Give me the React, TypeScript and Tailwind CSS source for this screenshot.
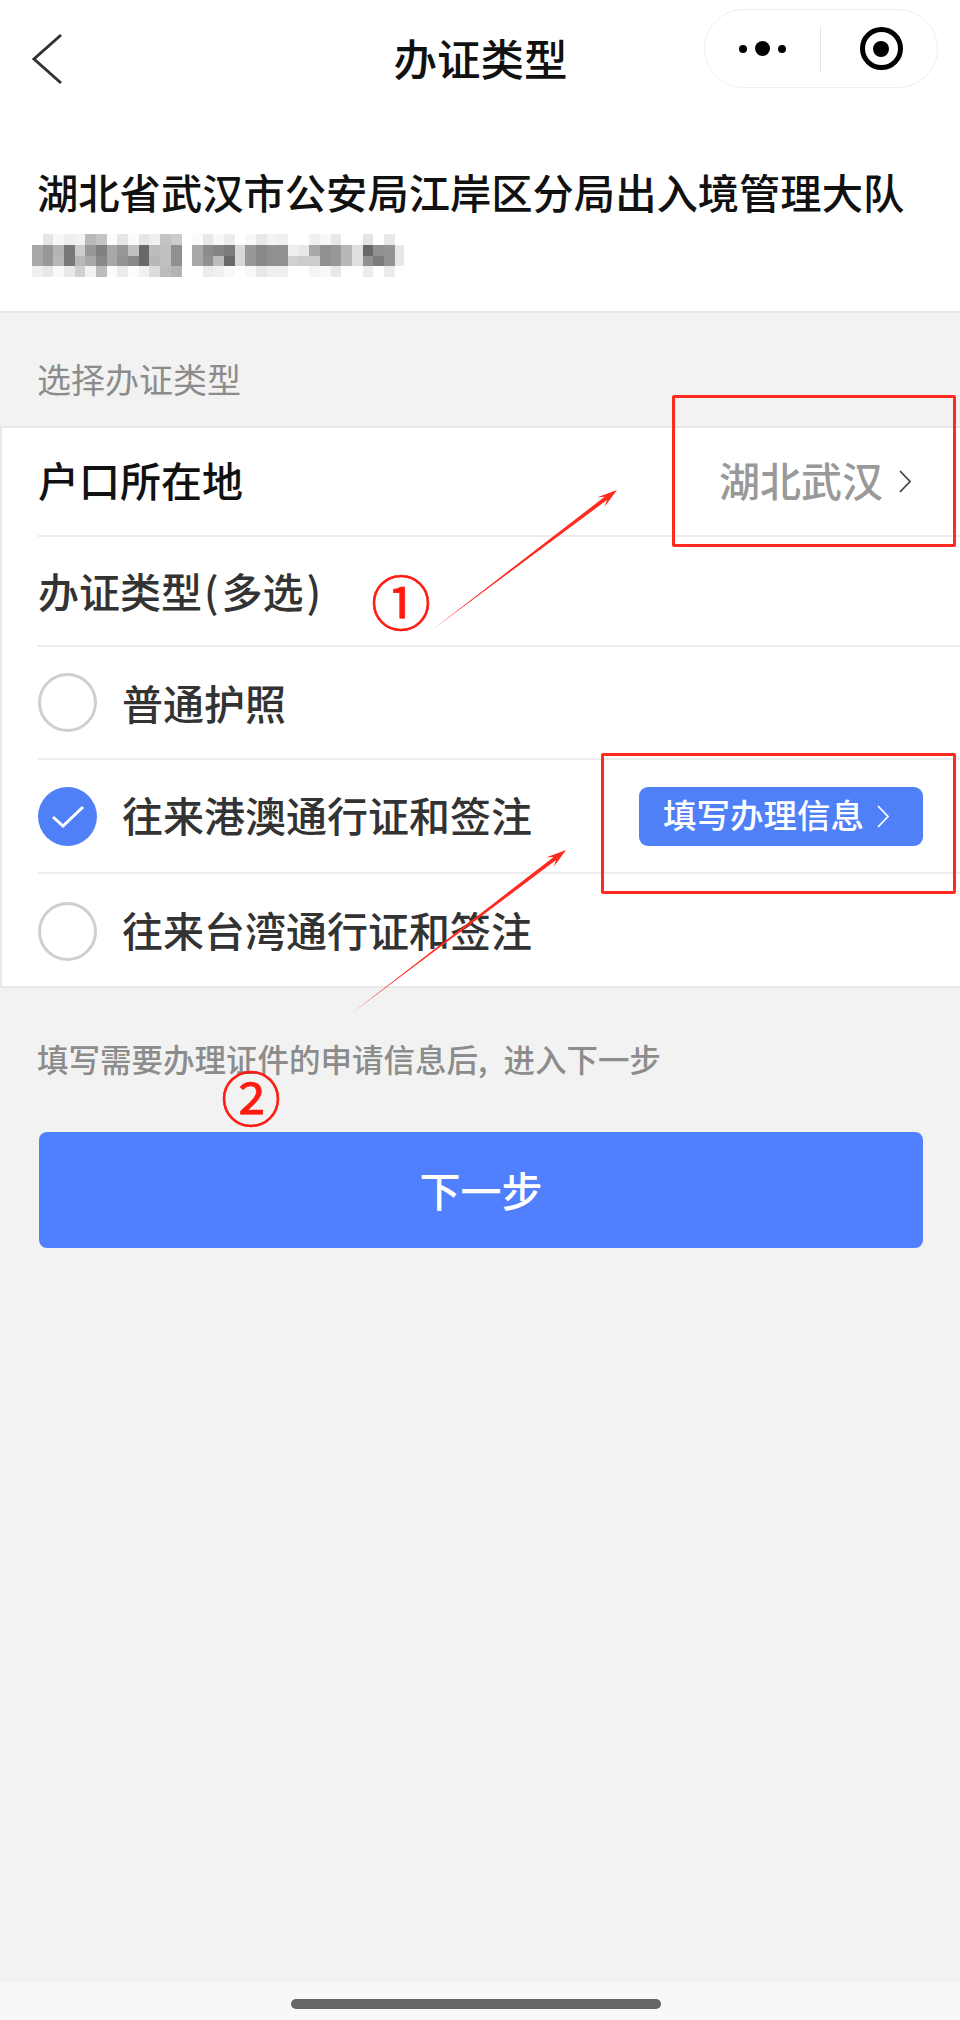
const mosaicLeft = [
  ['fff', 'e5e5e5', 'f8f8f8', 'eee', 'f2f2f2', 'b8b8b8', 'c4c4c4', 'fbfbfb', 'e6e6e6', 'fbfbfb', 'e6e6e6', 'f0f0f0', 'c4c4c4', 'ccc'],
  ['a8a8a8', '989898', 'b4b4b4', '787878', 'ccc', '989898', '808080', 'a8a8a8', '989898', 'c0c0c0', '686868', 'bcbcbc', 'c0c0c0', '909090'],
  ['a8a8a8', '989898', 'b8b8b8', '787878', 'b8b8b8', 'a8a8a8', '888', 'a8a8a8', '949494', '888', '686868', 'b8b8b8', 'c0c0c0', '909090'],
  ['f0f0f0', 'e8e8e8', 'f8f8f8', 'e8e8e8', 'd0d0d0', 'f2f2f2', 'bcbcbc', 'fcfcfc', 'ececec', 'fcfcfc', 'f0f0f0', 'dcdcdc', 'bcbcbc', 'b4b4b4'],
]

const mosaicRight = [
  ['fbfbfb', 'e8e8e8', 'f8f8f8', 'ececec', 'fff', 'f8f8f8', 'e8e8e8', 'f4f4f4', 'f0f0f0', 'fff', 'fff', 'f0f0f0', 'f8f8f8', 'e8e8e8', 'fff', 'fff', 'e4e4e4', 'fff', 'e8e8e8', 'fff'],
  ['a8a8a8', '8c8c8c', '848484', '7c7c7c', 'd8d8d8', '989898', '888', '909090', '909090', 'eee', 'e8e8e8', 'a8a8a8', '909090', '989898', 'b8b8b8', 'e0e0e0', '686868', '909090', '949494', 'e8e8e8'],
  ['a8a8a8', '909090', 'bcbcbc', '686868', 'd8d8d8', '989898', '888', '909090', '909090', 'd0d0d0', 'ccc', 'ccc', '909090', '989898', 'b8b8b8', 'e0e0e0', '909090', '7c7c7c', '949494', 'e8e8e8'],
  ['fff', 'ececec', 'f0f0f0', 'f8f8f8', 'fff', 'f8f8f8', 'e8e8e8', 'f0f0f0', 'f0f0f0', 'fff', 'fff', 'f4f4f4', 'f8f8f8', 'e8e8e8', 'fff', 'fff', 'ececec', 'fff', 'ececec', 'fff'],
]

const CELL = 10.67

// the pixelated number under the office name
function Mosaic() {
  const rows = [
    { cells: mosaicLeft, x: 0 },
    { cells: mosaicRight, x: 160 },
  ]
  return (
    <svg width="372" height="43" viewBox="0 0 372 43" className="block" shapeRendering="crispEdges">
      {rows.map(part =>
        part.cells.map((row, r) =>
          row.map((c, i) => (
            <rect
              key={`${part.x}-${r}-${i}`}
              x={part.x + i * CELL}
              y={r * 10.75}
              width={CELL + 0.3}
              height={11}
              fill={`#${c}`}
            />
          )),
        ),
      )}
    </svg>
  )
}

function Chevron({ className, color }: { className: string; color: string }) {
  return (
    <svg viewBox="0 0 12 23" fill="none" className={className}>
      <polyline points="1,1 11,11.5 1,22" stroke={color} strokeWidth="1.8" />
    </svg>
  )
}

function Radio({ checked }: { checked?: boolean }) {
  if (checked) {
    return (
      <div className="w-[59px] h-[59px] shrink-0 rounded-full bg-[#5080f8] flex items-center justify-center">
        <svg width="59" height="59" viewBox="0 0 59 59" fill="none">
          <polyline points="15,30 25,39 45,20" stroke="#fff" strokeWidth="3" />
        </svg>
      </div>
    )
  }
  return <div className="w-[59px] h-[59px] shrink-0 rounded-full border-[3px] border-[#cfcfcf] bg-white" />
}

function Annotations() {
  return (
    <>
      <div className="absolute left-[672px] top-[395px] w-[284px] h-[152px] border-[3px] border-[#ff2a20] rounded-[2px]" />
      <div className="absolute left-[601px] top-[753px] w-[355px] h-[141px] border-[3px] border-[#ff2a20] rounded-[2px]" />
      <svg
        width="960"
        height="2020"
        viewBox="0 0 960 2020"
        className="absolute left-0 top-0 pointer-events-none"
      >
        <polygon
          points="432,630 607,500 604.6,506.8 617,490 597.4,497.2 604.6,496.8"
          fill="#ff2a20"
        />
        <polygon
          points="352,1013 556.1,860.1 553.7,866.9 566,850 546.5,857.3 553.7,856.9"
          fill="#ff2a20"
        />
      </svg>
      <span className="absolute left-[371px] top-[560px] text-[60px] leading-[80px] text-[#ff1a10] [-webkit-text-stroke:0.7px_#ff1a10]">①</span>
      <span className="absolute left-[221px] top-[1056px] text-[60px] leading-[80px] text-[#ff1a10] [-webkit-text-stroke:0.7px_#ff1a10]">②</span>
    </>
  )
}

export default function App() {
  return (
    <div className="relative w-[960px] h-[2020px] flex flex-col bg-[#f2f2f2] font-['Noto_Sans_CJK_SC','Noto_Sans',sans-serif] overflow-hidden">
      <div className="h-[313px] shrink-0 bg-white border-b-2 border-[#e8e8e8]">
        <div className="h-[118px] grid grid-cols-[1fr_auto_1fr] items-center">
          <svg width="32" height="52" viewBox="0 0 32 52" fill="none" className="ml-[31px]">
            <polyline points="30,2 3,26 30,50" stroke="#333" strokeWidth="3" />
          </svg>
          <h1 className="mb-[2px] ml-[1px] text-[43.5px] leading-[60px] font-medium text-[#111]">办证类型</h1>
          <div className="justify-self-end self-start mt-[9px] mr-[22px] w-[234px] h-[79px] rounded-full border border-[#eee] bg-white flex items-center">
            <div className="w-[115px] flex items-center justify-center gap-[8px]">
              <span className="w-[8px] h-[8px] rounded-full bg-black" />
              <span className="w-[15px] h-[15px] rounded-full bg-black" />
              <span className="w-[8px] h-[8px] rounded-full bg-black" />
            </div>
            <div className="w-[1px] h-[46px] bg-[#e6e6e6]" />
            <div className="flex-1 flex items-center justify-center pl-[4px]">
              <div className="w-[43px] h-[43px] rounded-full border-[5px] border-black flex items-center justify-center">
                <span className="w-[16px] h-[16px] rounded-full bg-black" />
              </div>
            </div>
          </div>
        </div>
        <div className="mt-[48px] px-[37px] text-[41.3px] leading-[50px] font-medium text-[#111] whitespace-nowrap">
          湖北省武汉市公安局江岸区分局出入境管理大队
        </div>
        <div className="mt-[18px] ml-[32px]">
          <Mosaic />
        </div>
      </div>

      <div className="h-[113px] shrink-0 pl-[37px] pt-[46px] text-[34px] leading-[40px] text-[#8c8c8c]">
        选择办证类型
      </div>

      <div className="shrink-0 bg-white border-y-2 border-l-2 border-[#e8e8e8]">
        <div className="ml-[36px] h-[109px] flex items-center justify-between border-b-2 border-[#ececec]">
          <span className="mb-[6px] text-[41px] leading-[50px] font-medium text-[#111]">户口所在地</span>
          <div className="flex items-center mr-[49px] gap-[16px]">
            <span className="mb-[6px] text-[41px] leading-[50px] font-medium text-[#999]">湖北武汉</span>
            <Chevron className="w-[12px] h-[23px]" color="#444" />
          </div>
        </div>
        <div className="ml-[36px] h-[110px] flex items-center border-b-2 border-[#ececec]">
          <span className="mb-[2px] text-[41px] leading-[50px] font-medium text-[#333]">
            办证类型<span className="ml-[2px] mr-[3px]">(</span>多选<span className="ml-[3px]">)</span>
          </span>
        </div>
        <div className="ml-[36px] h-[113px] flex items-center gap-[25px] border-b-2 border-[#ececec]">
          <Radio />
          <span className="mb-[2px] text-[41px] leading-[50px] font-medium text-[#333]">普通护照</span>
        </div>
        <div className="ml-[36px] h-[114px] flex items-center gap-[25px] border-b-2 border-[#ececec]">
          <Radio checked />
          <span className="mb-[4px] text-[41px] leading-[50px] font-medium text-[#333]">往来港澳通行证和签注</span>
          <button className="ml-[82px] w-[284px] h-[59px] rounded-[9px] bg-[#5080f8] flex items-center pl-[24px] gap-[13px]">
            <span className="mb-[4px] text-[33.5px] leading-[40px] font-medium text-white">填写办理信息</span>
            <Chevron className="w-[12px] h-[23px]" color="#fff" />
          </button>
        </div>
        <div className="ml-[36px] h-[112px] pt-[2px] flex items-center gap-[25px]">
          <Radio />
          <span className="mb-[4px] text-[41px] leading-[50px] font-medium text-[#333]">往来台湾通行证和签注</span>
        </div>
      </div>

      <div className="mt-[48px] px-[37px] text-[31.5px] leading-[44px] font-medium text-[#8c8c8c] whitespace-nowrap">
        填写需要办理证件的申请信息后<span className="mr-[9px]">,</span> 进入下一步
      </div>

      <button className="mt-[52px] ml-[39px] mr-[37px] h-[116px] shrink-0 rounded-[8px] bg-[#5080fe] text-[41px] font-medium text-white">
        下一步
      </button>

      <div className="mt-auto h-[37px] shrink-0 bg-[#f8f8f8] flex justify-center pt-[16px] pr-[8px]">
        <div className="w-[370px] h-[10px] rounded-full bg-[#666]" />
      </div>

      <Annotations />
    </div>
  )
}
